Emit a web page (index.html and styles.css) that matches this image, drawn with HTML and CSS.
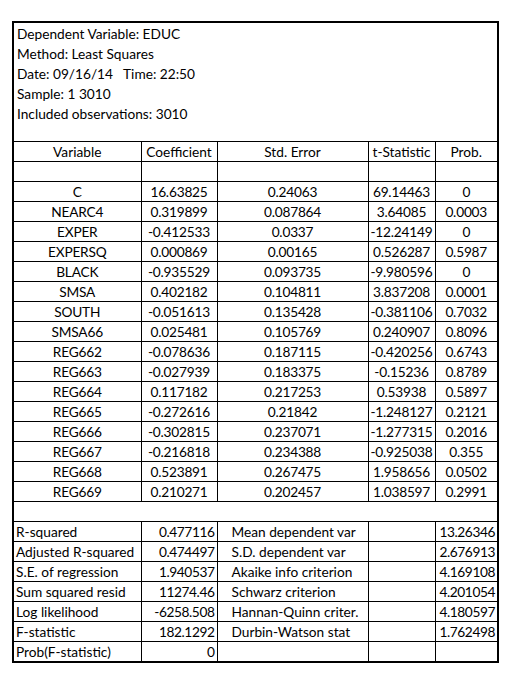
FILE: index.html
```html
<!DOCTYPE html>
<html lang="en">
<head>
  <meta charset="UTF-8">
  <title>EDUC - Least Squares</title>
  <link rel="stylesheet" href="styles.css">
</head>
<body>
  <div class="sheet">
    <table class="grid">
      <colgroup>
        <col class="c-a">
        <col class="c-b">
        <col class="c-c">
        <col class="c-d">
        <col class="c-e">
      </colgroup>
      <!-- cabecera de la estimacion -->
      <tr class="info"><td colspan="5">Dependent Variable: EDUC</td></tr>
      <tr class="info"><td colspan="5">Method: Least Squares</td></tr>
      <tr class="info"><td colspan="5">Date: 09/16/14&nbsp;&nbsp; Time: 22:50</td></tr>
      <tr class="info"><td colspan="5">Sample: 1 3010</td></tr>
      <tr class="info"><td colspan="5">Included observations: 3010</td></tr>
      <tr class="info"><td colspan="5"></td></tr>

      <tr class="head">
        <td>Variable</td><td>Coefficient</td><td>Std. Error</td><td>t-Statistic</td><td>Prob.</td>
      </tr>
      <tr class="coef"><td></td><td></td><td></td><td></td><td></td></tr>
      <tr class="coef"><td>C</td><td>16.63825</td><td>0.24063</td><td>69.14463</td><td>0</td></tr>
      <tr class="coef"><td>NEARC4</td><td>0.319899</td><td>0.087864</td><td>3.64085</td><td>0.0003</td></tr>
      <tr class="coef"><td>EXPER</td><td>-0.412533</td><td>0.0337</td><td>-12.24149</td><td>0</td></tr>
      <tr class="coef"><td>EXPERSQ</td><td>0.000869</td><td>0.00165</td><td>0.526287</td><td>0.5987</td></tr>
      <tr class="coef"><td>BLACK</td><td>-0.935529</td><td>0.093735</td><td>-9.980596</td><td>0</td></tr>
      <tr class="coef"><td>SMSA</td><td>0.402182</td><td>0.104811</td><td>3.837208</td><td>0.0001</td></tr>
      <tr class="coef"><td>SOUTH</td><td>-0.051613</td><td>0.135428</td><td>-0.381106</td><td>0.7032</td></tr>
      <tr class="coef"><td>SMSA66</td><td>0.025481</td><td>0.105769</td><td>0.240907</td><td>0.8096</td></tr>
      <tr class="coef"><td>REG662</td><td>-0.078636</td><td>0.187115</td><td>-0.420256</td><td>0.6743</td></tr>
      <tr class="coef"><td>REG663</td><td>-0.027939</td><td>0.183375</td><td>-0.15236</td><td>0.8789</td></tr>
      <tr class="coef"><td>REG664</td><td>0.117182</td><td>0.217253</td><td>0.53938</td><td>0.5897</td></tr>
      <tr class="coef"><td>REG665</td><td>-0.272616</td><td>0.21842</td><td>-1.248127</td><td>0.2121</td></tr>
      <tr class="coef"><td>REG666</td><td>-0.302815</td><td>0.237071</td><td>-1.277315</td><td>0.2016</td></tr>
      <tr class="coef"><td>REG667</td><td>-0.216818</td><td>0.234388</td><td>-0.925038</td><td>0.355</td></tr>
      <tr class="coef"><td>REG668</td><td>0.523891</td><td>0.267475</td><td>1.958656</td><td>0.0502</td></tr>
      <tr class="coef"><td>REG669</td><td>0.210271</td><td>0.202457</td><td>1.038597</td><td>0.2991</td></tr>

      <tr class="spacer"><td colspan="5"></td></tr>

      <!-- estadisticos -->
      <tr class="stat"><td>R-squared</td><td class="num">0.477116</td><td class="lbl">Mean dependent var</td><td></td><td class="num">13.26346</td></tr>
      <tr class="stat"><td>Adjusted R-squared</td><td class="num">0.474497</td><td class="lbl">S.D. dependent var</td><td></td><td class="num">2.676913</td></tr>
      <tr class="stat"><td>S.E. of regression</td><td class="num">1.940537</td><td class="lbl">Akaike info criterion</td><td></td><td class="num">4.169108</td></tr>
      <tr class="stat"><td>Sum squared resid</td><td class="num">11274.46</td><td class="lbl">Schwarz criterion</td><td></td><td class="num">4.201054</td></tr>
      <tr class="stat"><td>Log likelihood</td><td class="num">-6258.508</td><td class="lbl">Hannan-Quinn criter.</td><td></td><td class="num">4.180597</td></tr>
      <tr class="stat"><td>F-statistic</td><td class="num">182.1292</td><td class="lbl">Durbin-Watson stat</td><td></td><td class="num">1.762498</td></tr>
      <tr class="stat"><td>Prob(F-statistic)</td><td class="num">0</td><td class="lbl"></td><td></td><td></td></tr>
    </table>
  </div>
</body>
</html>
```

FILE: styles.css
```css
* {
  margin: 0;
  padding: 0;
  box-sizing: border-box;
}

body {
  font-family: 'Lato', 'Liberation Sans', sans-serif;
  font-size: 13.7px;
  color: #000;
  background: #fff;
  width: 511px;
  height: 683px;
  overflow: hidden;
}

/* Hoja con borde grueso */
.sheet {
  margin: 21px 0 0 12px;
  width: 487px;
  border: 2px solid #000;
}

.grid {
  width: 100%;
  table-layout: fixed;
  border-collapse: collapse;
  border-style: hidden;
}

.c-a { width: 127px; }
.c-b { width: 76px; }
.c-c { width: 151px; }
.c-d { width: 67px; }

.grid td {
  height: 20px;
  padding: 0 2px;
  border: 1px solid #000;
  white-space: nowrap;
  overflow: hidden;
  vertical-align: bottom;
  line-height: 18px;
}

.info td {
  border: none;
  padding-left: 3px;
}

.info:nth-child(6) td {
  height: 18px;
}

.head td,
.coef td {
  text-align: center;
  padding: 0;
}

.coef td {
  letter-spacing: -0.2px;
}

.spacer td {
  border-left: none;
  border-right: none;
}

.stat td {
  text-align: left;
}

.stat td.lbl {
  padding-left: 14px;
}

.stat td.num {
  text-align: right;
  padding-right: 2px;
  letter-spacing: -0.4px;
}
```
